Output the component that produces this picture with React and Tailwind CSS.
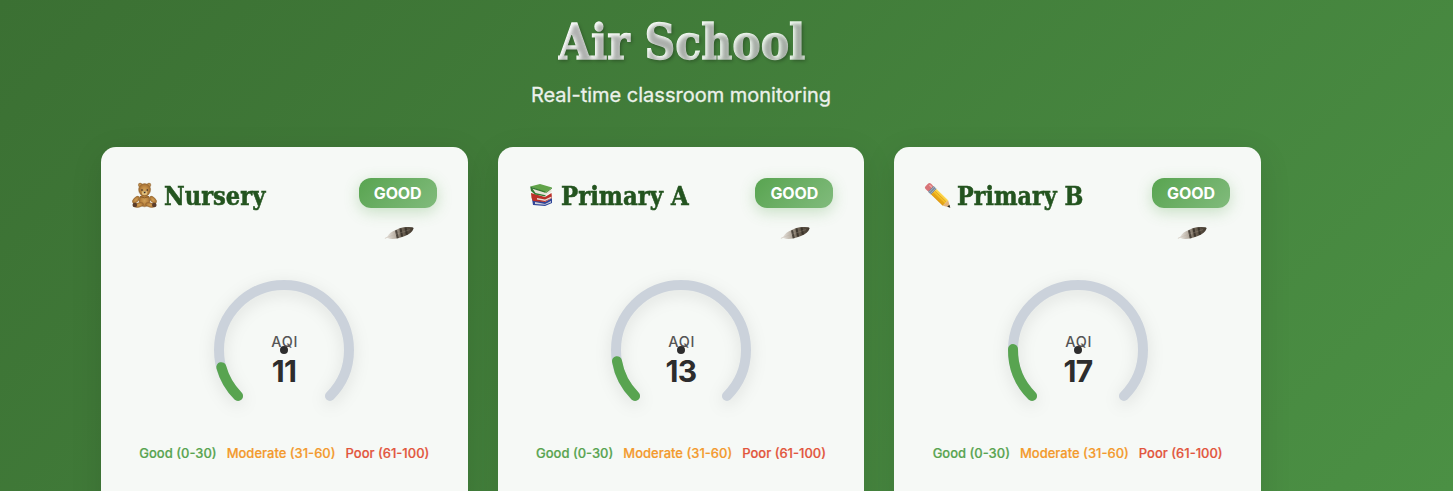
import React from 'react';

function Bear() {
  return (
    <svg width="27" height="27" viewBox="0 0 27 27" className="block">
      <defs>
        <radialGradient id="fur">
          <stop stopColor="#d0a158" />
          <stop offset=".65" stopColor="#b9823d" />
          <stop offset="1" stopColor="#986832" />
        </radialGradient>
      </defs>
      <g fill="url(#fur)" stroke="#95682f" strokeWidth=".4">
        <circle cx="9.2" cy="3" r="1.9" />
        <circle cx="18" cy="3" r="1.9" />
        <ellipse cx="5" cy="17.8" rx="2.4" ry="4.4" transform="rotate(45 5 17.8)" />
        <ellipse cx="22" cy="17.8" rx="2.4" ry="4.4" transform="rotate(-45 22 17.8)" />
        <ellipse cx="13.5" cy="18.6" rx="5.6" ry="6.2" />
        <ellipse cx="13.6" cy="7.8" rx="6" ry="6.2" />
        <ellipse cx="7.8" cy="23" rx="4.8" ry="2.2" transform="rotate(-12 7.8 23)" />
        <ellipse cx="19.2" cy="23" rx="4.8" ry="2.2" transform="rotate(12 19.2 23)" />
      </g>
      <ellipse cx="3.8" cy="23" rx="2.3" ry="2.3" fill="#5b3d2a" />
      <ellipse cx="23.3" cy="23" rx="2.3" ry="2.3" fill="#5b3d2a" />
      <ellipse cx="13.6" cy="11" rx="2.8" ry="2.2" fill="#dfbd7a" />
      <path d="M12.4 9.8h2.6l-1.3 1.6z" fill="#2e2525" />
      <circle cx="11" cy="8" r=".8" fill="#2e2525" />
      <circle cx="16.3" cy="8" r=".8" fill="#2e2525" />
      <path d="M9 14.6q4.5 2.4 9 0" fill="none" stroke="#875826" strokeWidth=".9" />
    </svg>
  );
}

function Books() {
  return (
    <svg width="27" height="27" viewBox="0 0 27 27" className="block">
      <path d="M4 17l13 3 7-4v5l-7 3-12-1z" fill="#304699" />
      <path d="M7 20l10 2 6-3v1.6l-6 2.2L7 22z" fill="#cfd2da" />
      <path d="M3 11l14 4 6.5-4 .5 5-7 4L5 19l-1.5-3z" fill="#bb3029" />
      <path d="M9 16l8 1.6 6.5-3v1.3l-6.5 3-8-1.4z" fill="#e5dcd6" />
      <path d="M2.4 5.5l4 5 11 3 6.3-4-.8-3.2z" fill="#e7e4d8" />
      <path d="M2.2 4.5L12 2l12 3.5-6.7 5z" fill="#61a449" />
      <path d="M2.2 4.5L3 9l4 3.5 10.5 2v-1.3l-10-2.3-3-4.2 12.8 4V9.6z" fill="#347a32" />
      <path d="M17.3 10.5l6.7-5v1l-6 4.6z" fill="#438934" />
    </svg>
  );
}

function Pencil() {
  return (
    <svg width="27" height="27" viewBox="0 0 27 27" className="block">
      <defs>
        <linearGradient id="wood" x1="0" y1="1" x2="0" y2="0">
          <stop stopColor="#dc940c" />
          <stop offset=".5" stopColor="#f4bd23" />
          <stop offset="1" stopColor="#ffdc58" />
        </linearGradient>
      </defs>
      <g transform="translate(3.6 3.5) rotate(44)">
        <rect x="-1" y="-3.6" width="6.5" height="7.6" rx="2" fill="#d87477" />
        <path d="M1 -1.6h4" stroke="#efa7a4" strokeWidth="1.4" />
        <rect x="4.7" y="-3.8" width="4.2" height="8" fill="#718397" />
        <path d="M5.8-3.7v7.8M7.6-3.7v7.8" stroke="#b7c5d2" strokeWidth=".7" />
        <path d="M8.8-3.7H25V4.1H8.8z" fill="url(#wood)" />
        <path d="M9-1.1h16M9 1.5h16" stroke="#cf8d12" strokeWidth=".5" />
        <path d="M25-3.7l6.6 3.9-6.6 3.9z" fill="#e3b47a" />
        <path d="M29-1.3l2.8 1.5-2.8 1.5z" fill="#292929" />
      </g>
    </svg>
  );
}

function Feather() {
  return (
    <svg width="30" height="14" viewBox="0 0 30 14" className="block">
      <defs>
        <linearGradient id="plume">
          <stop stopColor="#e4e0d9" />
          <stop offset=".3" stopColor="#b9b0a4" />
          <stop offset=".5" stopColor="#74695a" />
          <stop offset="1" stopColor="#40372c" />
        </linearGradient>
      </defs>
      <path d="M.9 12.4l3-1.4" stroke="#d8d2c9" />
      <path d="M3.4 12Q3.2 8.4 9 5.2 17 .6 24 .9 30 .8 29.6 2.6 28 7.4 21 10 9 14.6 3.4 12z" fill="url(#plume)" />
      <path d="M12 4.2l1.8 8M16.5 2.4l1.6 8.2M21.5 1.4l1.4 7.4" stroke="#302a22" strokeWidth="2.1" opacity=".75" />
      <path d="M3 11.3L26 3.6" stroke="#b2a99a" strokeWidth=".5" opacity=".5" />
    </svg>
  );
}

const rooms = [
  { name: 'Nursery', icon: <Bear />, aqi: 11, width: 101 },
  { name: 'Primary A', icon: <Books />, aqi: 13, width: 128 },
  { name: 'Primary B', icon: <Pencil />, aqi: 17, width: 126 },
];

// Condenses the fallback slab face to the measure of the heading.
function SlabText({ children, width, className }) {
  const ref = React.useRef(null);
  const [scale, setScale] = React.useState(1);
  React.useLayoutEffect(() => {
    setScale(width / ref.current.offsetWidth);
  }, [width]);
  return (
    <span className="inline-block whitespace-nowrap" style={{ width }}>
      <span
        ref={ref}
        className={'inline-block origin-left font-["Roboto_Slab","DejaVu_Serif",serif] font-bold ' + className}
        style={{ transform: `scaleX(${scale})` }}
      >
        {children}
      </span>
    </span>
  );
}

function Gauge({ value }) {
  const angle = ((135 + value * 2.7) * Math.PI) / 180;
  const x = 75 + 65 * Math.cos(angle);
  const y = 75 + 65 * Math.sin(angle);
  return (
    <svg width="150" height="150" viewBox="0 0 150 150" className="block overflow-visible">
      <g fill="none" strokeWidth="10" strokeLinecap="round" className="drop-shadow-[0_4px_8px_rgba(0,0,0,0.1)]">
        <path d="M29.04 120.96A65 65 0 1 1 120.96 120.96" stroke="#cbd2db" />
        <path d={`M29.04 120.96A65 65 0 0 1 ${x} ${y}`} stroke="#58a450" />
      </g>
      <text x="75.3" y="72" textAnchor="middle" textLength="26" className='fill-[#555] font-["Inter",sans-serif] text-[14.4px] font-medium'>AQI</text>
      <text x="75" y="107" textAnchor="middle" className='fill-[#2d2d2d] font-["Inter",sans-serif] text-[30px] font-bold tracking-[-0.6px]'>{value}</text>
      <circle cx="75" cy="75" r="4" fill="#2d2d2d" />
    </svg>
  );
}

function RoomCard({ room }) {
  return (
    <section className="flex h-[420px] flex-col items-center rounded-[15px] bg-[#f6f9f6] pr-[31px] pl-[30px] pt-[31px] shadow-[0_8px_32px_rgba(0,0,0,0.1)]">
      <header className="flex w-full items-start justify-between">
        <h2 className="flex h-[34px] items-center gap-[6px] leading-[34px]">
          {room.icon}
          <SlabText width={room.width} className="pt-[4px] text-[26px] text-[#23541f] [-webkit-text-stroke:0.6px_#23541f]">{room.name}</SlabText>
        </h2>
        <div className="flex w-[78px] flex-col items-center">
          <span className='flex h-[30px] w-full items-center justify-center rounded-xl bg-linear-135 from-[#58a450] to-[#81bb7c] font-["Inter",sans-serif] text-[16px] font-bold tracking-[-0.1px] text-white shadow-[0_4px_15px_rgba(88,164,80,0.3)]'>GOOD</span>
          <span className="mt-[18px] pl-[2px]"><Feather /></span>
        </div>
      </header>
      <div className="mt-[35px] pl-px"><Gauge value={room.aqi} /></div>
      <div className='mt-[18px] flex justify-center gap-[10px] whitespace-nowrap pl-px font-["Inter",sans-serif] text-[13px] leading-5 font-medium'>
        <span className="text-[#58a450] [-webkit-text-stroke:0.2px_#58a450]">Good (0-30)</span>
        <span className="text-[#f39a2d] [-webkit-text-stroke:0.2px_#f39a2d]">Moderate (31-60)</span>
        <span className="text-[#e2553c] [-webkit-text-stroke:0.2px_#e2553c]">Poor (61-100)</span>
      </div>
    </section>
  );
}

export default function App() {
  return (
    <main className="h-[491px] overflow-hidden bg-linear-135 from-[#3b7033] to-[#4b9044]">
      <div className="ml-[101px] w-[1160px]">
        <header className="flex h-[147px] flex-col items-center pt-2">
          <h1 className="h-[68px] leading-[68px]">
            <SlabText width={247} className="bg-linear-135 from-white to-[#e8f5e8] bg-clip-text text-[49px] text-transparent [-webkit-text-stroke:1.4px_transparent] [text-shadow:2px_2px_4px_rgba(0,0,0,0.3)]">Air School</SlabText>
          </h1>
          <p className='mt-1 font-["Inter",sans-serif] text-[20px] leading-[30px] text-[#ecf1eb] [-webkit-text-stroke:0.3px_#ecf1eb]'>Real-time classroom monitoring</p>
        </header>
        <div className="grid grid-cols-3 gap-[30px]">
          {rooms.map((room) => <RoomCard key={room.name} room={room} />)}
        </div>
      </div>
    </main>
  );
}
